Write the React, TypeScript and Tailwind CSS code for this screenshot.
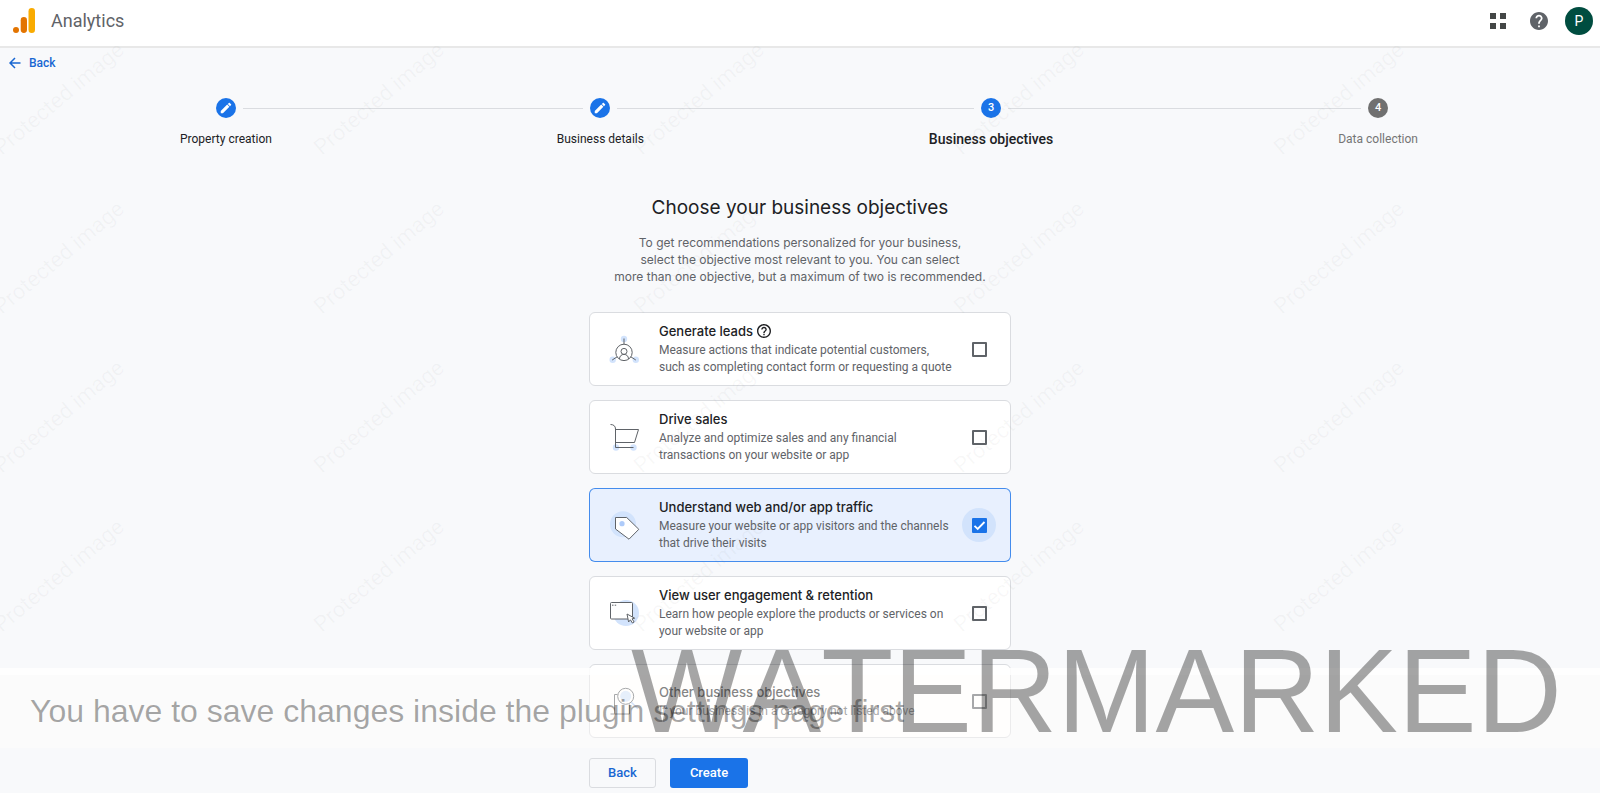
import { useState, type ReactNode } from "react";

function LeadsIcon() {
  return (
    <svg width="30" height="30" viewBox="0 0 30 30" fill="none" stroke="#5f6368" className="shrink-0 overflow-visible" aria-hidden="true">
      <g fill="#d2e3fc" stroke="none">
        <circle cx="15" cy="5" r="3.2" />
        <circle cx="3.7" cy="25.7" r="3.2" />
        <circle cx="26.8" cy="25.7" r="3.2" />
      </g>
      <circle cx="15" cy="18.4" r="8.2" />
      <circle cx="15" cy="17.4" r="3" />
      <path d="M10.5 25c0-3 2-4.600 4.500-4.600s4.500 1.600 4.500 4.600M15 4.500v5.700M8.200 22.800l-5 3.200M21.800 22.800l5 3.200" />
    </svg>
  );
}

function CartIcon() {
  return (
    <svg width="30" height="30" viewBox="0 0 30 30" fill="none" stroke="#5f6368" className="shrink-0 overflow-visible" aria-hidden="true">
      <g fill="#d2e3fc" stroke="none">
        <circle cx="7" cy="25.500" r="3.2" />
        <circle cx="24.500" cy="25.500" r="3.2" />
      </g>
      <path d="M1.500 2.500c3 0 5 1.500 5 4.500v18.500h18M6.500 7.500h23l-4 13h-19" />
    </svg>
  );
}

function TagIcon() {
  return (
    <svg width="30" height="30" viewBox="0 0 30 30" fill="none" stroke="#5f6368" className="shrink-0 overflow-visible" aria-hidden="true">
      <circle cx="14" cy="14.300" r="13" fill="#d2e3fc" stroke="none" />
      <path d="M6.500 7.500h11.200L29.800 19.300 20 29.200 6.500 19z" fill="#fff" strokeLinejoin="round" />
      <circle cx="13" cy="13.700" r="2.600" fill="#aecbfa" stroke="none" />
    </svg>
  );
}

function WindowIcon() {
  return (
    <svg width="30" height="30" viewBox="0 0 30 30" fill="none" stroke="#5f6368" className="shrink-0 overflow-visible" aria-hidden="true">
      <circle cx="17" cy="15" r="13" fill="#d2e3fc" stroke="none" />
      <rect x="1.500" y="4.500" width="22" height="16.500" rx="1" fill="#fff" />
      <path d="M3 7.200h1.500M5.700 7.200h1.500" />
      <path d="M18 16l1.600 8 1.800-2.200 2 3.200 1.700-1-2-3.200 2.600-.6z" fill="#fff" strokeLinejoin="round" />
    </svg>
  );
}

function SearchPageIcon() {
  return (
    <svg width="30" height="30" viewBox="0 0 30 30" fill="none" stroke="#5f6368" className="shrink-0 overflow-visible" aria-hidden="true">
      <path d="M8.500 8.500h-3V28H20.500v-9.500M1.500 28h4" />
      <path d="M22.300 16.300l6.500 6.500" stroke="#aecbfa" strokeWidth="1.500" />
      <circle cx="16.700" cy="10.300" r="8" fill="#fff" />
      <circle cx="16.700" cy="10.300" r="5.500" fill="#d2e3fc" stroke="none" />
    </svg>
  );
}

function Logo() {
  return (
    <svg width="22" height="26" viewBox="0 0 22 26" aria-hidden="true">
      <rect x="15.500" y="0" width="6.500" height="25" rx="3.250" fill="#f9ab00" />
      <rect x="7.700" y="9" width="6.300" height="16" rx="3.150" fill="#e37400" />
      <circle cx="3" cy="22" r="3" fill="#e37400" />
    </svg>
  );
}

type Step = { label: string; state: "done" | "current" | "todo" };

const STEPS: Step[] = [
  { label: "Property creation", state: "done" },
  { label: "Business details", state: "done" },
  { label: "Business objectives", state: "current" },
  { label: "Data collection", state: "todo" },
];

const LABEL_STYLES = {
  done: "text-xs text-[#202124]",
  current: "text-sm font-medium text-[#202124]",
  todo: "text-xs text-[#757575]",
};

type Objective = { id: string; title: string; lines: string[]; icon: ReactNode; help?: boolean };

const OBJECTIVES: Objective[] = [
  { id: "leads", title: "Generate leads", lines: ["Measure actions that indicate potential customers,", "such as completing contact form or requesting a quote"], icon: <LeadsIcon />, help: true },
  { id: "sales", title: "Drive sales", lines: ["Analyze and optimize sales and any financial", "transactions on your website or app"], icon: <CartIcon /> },
  { id: "traffic", title: "Understand web and/or app traffic", lines: ["Measure your website or app visitors and the channels", "that drive their visits"], icon: <TagIcon /> },
  { id: "engagement", title: "View user engagement & retention", lines: ["Learn how people explore the products or services on", "your website or app"], icon: <WindowIcon /> },
  { id: "other", title: "Other business objectives", lines: ["If your business is in a category not listed above"], icon: <SearchPageIcon /> },
];

function Header() {
  return (
    <header className="flex h-12 items-center border-b-2 border-[#e8e8e8] bg-white pr-[7px] pb-1 pl-[13px]">
      <Logo />
      <span className="ml-4 text-lg text-[#5f6368]">Analytics</span>
      <div className="ml-auto flex items-center">
        <button aria-label="Apps">
          <svg width="16" height="16" viewBox="0 0 16 16" fill="#444746"><path d="M0 0h6v6H0zM10 0h6v6h-6zM0 10h6v6H0zM10 10h6v6h-6z" /></svg>
        </button>
        <button aria-label="Help" className="ml-6">
          <svg width="18" height="18" viewBox="2 2 20 20" fill="#5f6368"><path d="M12 2C6.480 2 2 6.480 2 12s4.480 10 10 10 10-4.480 10-10S17.520 2 12 2zm1 17h-2v-2h2v2zm2.070-7.750l-.9.920C13.450 12.900 13 13.500 13 15h-2v-.5c0-1.100.45-2.100 1.170-2.830l1.240-1.260c.37-.36.59-.86.59-1.410 0-1.100-.9-2-2-2s-2 .9-2 2H8c0-2.210 1.790-4 4-4s4 1.790 4 4c0 .88-.36 1.680-.93 2.250z" /></svg>
        </button>
        <button aria-label="Account" className="ml-[17px] flex h-7 w-7 items-center justify-center rounded-full bg-[#004d40] text-sm text-white">P</button>
      </div>
    </header>
  );
}

function Stepper() {
  return (
    <ol className="flex pt-6 pr-[182px] pl-[180px]">
      {STEPS.map((step, i) => (
        <li key={step.label} className={i < STEPS.length - 1 ? "flex flex-auto" : "flex"}>
          <div className="flex flex-col">
            <div className="flex items-center gap-[7px]">
              <span className={i > 0 ? "h-px flex-1 bg-[#dadce0]" : "h-px flex-1"} />
              <span className={`flex h-5 w-5 items-center justify-center rounded-full text-[11px] font-medium text-white ${step.state === "todo" ? "bg-[#707070]" : "bg-[#1a73e8]"}`}>
                {step.state === "done" ? (
                  <svg width="14" height="14" viewBox="0 0 24 24" fill="#fff" aria-hidden="true"><path d="M3 17.250V21h3.750L17.810 9.940l-3.750-3.750L3 17.250zM20.710 7.040c.39-.39.39-1.020 0-1.410l-2.340-2.340c-.39-.39-1.020-.39-1.410 0l-1.830 1.830 3.750 3.750 1.830-1.830z" /></svg>
                ) : (
                  i + 1
                )}
              </span>
              <span className={i < STEPS.length - 1 ? "h-px flex-1 bg-[#dadce0]" : "h-px flex-1"} />
            </div>
            <span className={`mt-[11px] leading-5 whitespace-nowrap ${LABEL_STYLES[step.state]}`}>{step.label}</span>
          </div>
          {i < STEPS.length - 1 && <span className="flex h-5 flex-1 items-center"><span className="h-px w-full bg-[#dadce0]" /></span>}
        </li>
      ))}
    </ol>
  );
}

function ObjectiveCard({ item, checked, onToggle }: { item: Objective; checked: boolean; onToggle: () => void }) {
  return (
    <label htmlFor={item.id} className={`flex h-[74px] items-center rounded-md border pr-3.5 pl-[19px] ${checked ? "border-[#1a73e8]/80 bg-[#e8f0fe]" : "border-[#dadce0] bg-white"}`}>
      {item.icon}
      <span className="ml-5 flex flex-1 flex-col whitespace-nowrap">
        <span className="mb-0.5 flex items-center gap-1 font-[Inter,sans-serif] text-[13px] leading-[18px] font-medium text-[#202124]">
          {item.title}
          {item.help && (
            <svg width="14" height="14" viewBox="2 2 20 20" fill="#202124" aria-hidden="true"><path d="M11 18h2v-2h-2v2zm1-16C6.480 2 2 6.480 2 12s4.480 10 10 10 10-4.480 10-10S17.520 2 12 2zm0 18c-4.410 0-8-3.590-8-8s3.590-8 8-8 8 3.590 8 8-3.590 8-8 8zm0-14c-2.210 0-4 1.790-4 4h2c0-1.100.9-2 2-2s2 .9 2 2c0 2-3 1.750-3 5h2c0-2.250 3-2.500 3-5 0-2.210-1.790-4-4-4z" /></svg>
          )}
        </span>
        {item.lines.map((line) => (
          <span key={line} className="text-xs leading-[17px] text-[#5f6368]">{line}</span>
        ))}
      </span>
      <span className={`-ml-3 grid h-[34px] w-[34px] shrink-0 place-items-center rounded-full ${checked ? "bg-[#d2e3fc]" : ""}`}>
        <input id={item.id} type="checkbox" checked={checked} onChange={onToggle} className="col-start-1 row-start-1 h-[15px] w-[15px] appearance-none rounded-[1px] border-2 border-[#5f6368] checked:border-[#1a73e8] checked:bg-[#1a73e8]" />
        {checked && (
          <svg width="15" height="15" viewBox="0 0 15 15" fill="none" stroke="#fff" strokeWidth="1.800" className="pointer-events-none col-start-1 row-start-1"><path d="M2.500 7.800l3.200 3.200 6.800-7" /></svg>
        )}
      </span>
    </label>
  );
}

function ProtectedOverlay() {
  return (
    <div className="pointer-events-none absolute inset-x-0 top-[19px] grid grid-cols-5 overflow-hidden" aria-hidden="true">
      {Array.from({ length: 20 }, (_, i) => (
        <div key={i} className="flex h-[159px] items-center">
          <span className="-ml-[22px] -rotate-40 text-[22px] whitespace-nowrap text-[#808080]/6">Protected image</span>
        </div>
      ))}
    </div>
  );
}

function WatermarkBanner() {
  return (
    <div className="pointer-events-none absolute inset-x-0 top-[668px] font-['Liberation_Sans',Arial,sans-serif]">
      <div className="h-20 border-t-[7px] border-white/80 bg-[#fefdfb]/45" />
      <p className="absolute top-[23px] left-[30px] text-[32px] leading-10 whitespace-nowrap text-black/35">You have to save changes inside the plugin settings page first</p>
      <p className="absolute -top-[43px] right-[38px] text-[118px] leading-[132px] whitespace-nowrap text-black/35 [font-kerning:none]">WATERMARKED</p>
    </div>
  );
}

export default function App() {
  const [selected, setSelected] = useState<string[]>(["traffic"]);

  const toggle = (id: string) => {
    setSelected((prev) => (prev.includes(id) ? prev.filter((s) => s !== id) : [...prev, id]));
  };

  return (
    <div className="relative min-h-screen overflow-hidden bg-[#f8f9fb] font-[Roboto,sans-serif]">
      <Header />
      <main>
        <a href="#back" className="flex h-[26px] items-center gap-2 pt-1 pl-[9px] text-xs font-medium text-[#1967d2]">
          <svg width="12" height="12" viewBox="0 0 24 24" fill="none" stroke="currentColor" strokeWidth="3" aria-hidden="true"><path d="M23 12H3M12 2L2 12l10 10" /></svg>
          Back
        </a>
        <Stepper />

        <section className="mx-auto w-[422px] pt-[45px]">
          <h1 className="text-center font-[Inter,sans-serif] text-[19px] leading-7 text-[#202124]">Choose your business objectives</h1>
          <p className="mt-3 text-center font-[Inter,sans-serif] text-xs leading-[17px] text-[#5f6368]">
            To get recommendations personalized for your business,
            <br />
            select the objective most relevant to you. You can select
            <br />
            more than one objective, but a maximum of two is recommended.
          </p>

          <div className="mt-[27px] flex flex-col gap-3.5">
            {OBJECTIVES.map((item) => (
              <ObjectiveCard key={item.id} item={item} checked={selected.includes(item.id)} onToggle={() => toggle(item.id)} />
            ))}
          </div>

          <div className="mt-5 flex gap-3.5 text-[13px] font-medium">
            <button className="h-[30px] w-[67px] rounded-[3px] border border-[#dadce0] text-[#1967d2]">Back</button>
            <button className="h-[30px] w-[78px] rounded-[3px] bg-[#1a73e8] text-white">Create</button>
          </div>
        </section>
      </main>
      <ProtectedOverlay />
      <WatermarkBanner />
    </div>
  );
}
